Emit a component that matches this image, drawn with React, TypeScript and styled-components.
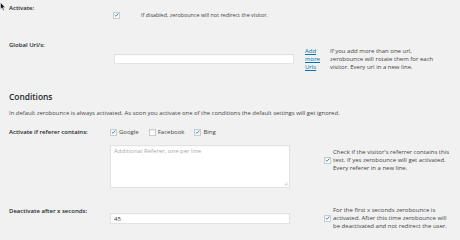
import React from "react";
import styled, { createGlobalStyle } from "styled-components";

const Global = createGlobalStyle`
  html, body { margin: 0; padding: 0; background: #f1f1f1; }
  body { font-family: "Open Sans", "Liberation Sans", sans-serif; color: #444; width: 460px; height: 240px; overflow: hidden; }
`;

const Page = styled.div`
  position: relative;
  padding-left: 9px;
  font-size: 6px;
  line-height: 8px;
`;

const Cursor = styled.svg`
  position: absolute;
  left: 0;
  top: 2px;
`;

const Row = styled.div<{ $mt: number }>`
  display: flex;
  align-items: flex-start;
  margin-top: ${(p) => p.$mt}px;
`;

const Label = styled.div<{ $w: number; $pt: number }>`
  flex: none;
  width: ${(p) => p.$w}px;
  padding-top: ${(p) => p.$pt}px;
  font-weight: 600;
  color: #23282d;
  white-space: nowrap;
`;

const Field = styled.div<{ $pt?: number }>`
  display: flex;
  align-items: center;
  padding-top: ${(p) => p.$pt ?? 0}px;
`;

const Column = styled.div`
  display: flex;
  flex-direction: column;
`;

const Box = styled.span<{ $checked?: boolean }>`
  flex: none;
  width: 7px;
  height: 7px;
  box-sizing: border-box;
  background: #fff;
  border: 0.6px solid #c8cbcf;
  box-shadow: inset 0 0.5px 1px rgba(0, 0, 0, 0.1);
  display: inline-flex;
  align-items: center;
  justify-content: center;
  svg { display: ${(p) => (p.$checked ? "block" : "none")}; }
`;

const Check = ({ checked = true }: { checked?: boolean }) => (
  <Box $checked={checked}>
    <svg width="6" height="6" viewBox="0 0 10 10">
      <path d="M1.6 5.4 L4 7.6 L8.6 2.2" fill="none" stroke="#1e8cbe" strokeWidth="1.9" />
    </svg>
  </Box>
);

const Desc = styled.div<{ $ml: number; $pt?: number; $fs?: number }>`
  margin-left: ${(p) => p.$ml}px;
  padding-top: ${(p) => p.$pt ?? 0}px;
  font-size: ${(p) => p.$fs ?? 6}px;
  white-space: nowrap;
  color: #444;
`;

const TextInput = styled.div<{ $ml?: number; $mt?: number; $h: number }>`
  flex: none;
  width: 180px;
  height: ${(p) => p.$h}px;
  margin-left: ${(p) => p.$ml ?? 0}px;
  margin-top: ${(p) => p.$mt ?? 0}px;
  box-sizing: border-box;
  background: #fff;
  border: 0.5px solid #e2e2e2;
  box-shadow: inset 0 0.5px 1px rgba(0, 0, 0, 0.05);
  padding: 1px 3px;
  line-height: 8px;
  color: #32373c;
  position: relative;
`;

const Placeholder = styled.span`
  color: #a7aaad;
`;

const Grip = styled.svg`
  position: absolute;
  right: 1px;
  bottom: 1px;
`;

const LinkCol = styled.a`
  display: block;
  width: 18px;
  margin-left: 11px;
  padding-top: 6px;
  color: #0073aa;
  text-decoration: underline;
  line-height: 8px;
`;

const Heading = styled.div`
  margin-top: 21px;
  font-size: 8.4px;
  line-height: 10px;
  font-weight: 600;
  color: #23282d;
`;

const Para = styled.div`
  margin-top: 7px;
  font-size: 5.9px;
  white-space: nowrap;
`;

const Choice = styled.label`
  display: inline-flex;
  align-items: center;
  gap: 2px;
  margin-right: 10px;
  line-height: 8px;
`;

const Choices = styled.div`
  display: flex;
  align-items: center;
`;

const SideDesc = styled.div<{ $ml: number; $mt: number }>`
  display: flex;
  align-items: center;
  gap: 2px;
  margin-left: ${(p) => p.$ml}px;
  margin-top: ${(p) => p.$mt}px;
`;

export default function App() {
  return (
    <>
      <Global />
      <Page>
        <Cursor width="6" height="9" viewBox="0 0 6 9">
          <path d="M0.5 0.5 L0.5 7.2 L2 5.8 L3.2 8.5 L4.2 8 L3.1 5.4 L5.2 5.4 Z" fill="#111" stroke="#fff" strokeWidth="0.5" />
        </Cursor>

        <Row $mt={0}>
          <Label $w={104} $pt={4}>Activate:</Label>
          <Field $pt={11}>
            <Check />
            <Desc $ml={21} $fs={5.4}>If disabled, zerobounce will not redirect the visitor.</Desc>
          </Field>
        </Row>

        <Row $mt={22}>
          <Label $w={105} $pt={0}>Global Url/s:</Label>
          <TextInput $mt={13} $h={10} />
          <LinkCol href="#">Add<br />more<br />Urls</LinkCol>
          <Desc $ml={7} $pt={6}>
            If you add more than one url,<br />
            zerobounce will rotate them for each<br />
            visitor. Every url in a new line.
          </Desc>
        </Row>

        <Heading>Conditions</Heading>
        <Para>In default zerobounce is always activated. As soon you activate one of the conditions the default settings will get ignored.</Para>

        <Row $mt={11}>
          <Label $w={101} $pt={0}>Activate if referer contains:</Label>
          <Column>
            <Choices>
              <Choice><Check />Google</Choice>
              <Choice><Check checked={false} />Facebook</Choice>
              <Choice><Check />Bing</Choice>
            </Choices>
            <TextInput $mt={9} $h={43}>
              <Placeholder>Additional Referer, one per line</Placeholder>
              <Grip width="4" height="4" viewBox="0 0 4 4">
                <path d="M3.6 0.6 L0.6 3.6 M3.6 2 L2 3.6" stroke="#999" strokeWidth="0.5" />
              </Grip>
            </TextInput>
          </Column>
          <SideDesc $ml={34} $mt={20}>
            <Check />
            <Desc $ml={0}>
              Check if the visitor's referrer contains this<br />
              text. If yes zerobounce will get activated.<br />
              Every referer in a new line.
            </Desc>
          </SideDesc>
        </Row>

        <Row $mt={18}>
          <Label $w={101} $pt={1}>Deactivate after x seconds:</Label>
          <TextInput $mt={7} $h={11}>45</TextInput>
          <SideDesc $ml={34} $mt={0}>
            <Check />
            <Desc $ml={0}>
              For the first x seconds zerobounce is<br />
              activated. After this time zerobounce will<br />
              be deactivated and not redirect the user.
            </Desc>
          </SideDesc>
        </Row>
      </Page>
    </>
  );
}
